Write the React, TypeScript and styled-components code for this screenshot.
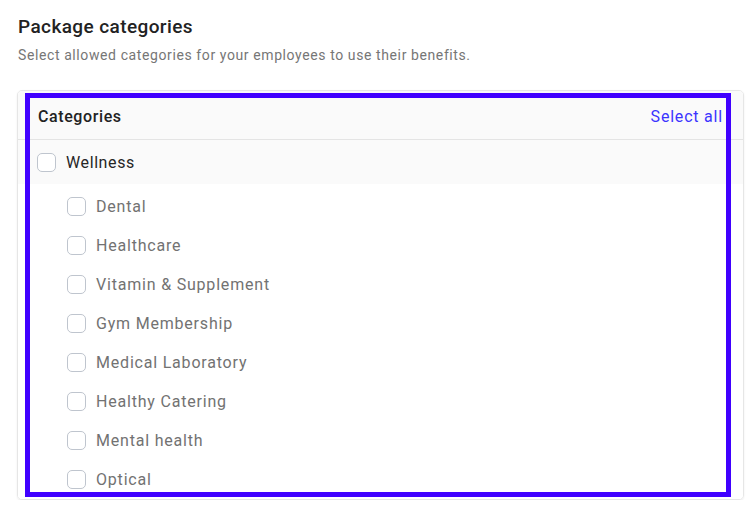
import React from "react";
import styled, { createGlobalStyle } from "styled-components";

const Global = createGlobalStyle`
  html, body { margin: 0; padding: 0; background: #ffffff; }
  body { font-family: Roboto, "Noto Sans", "Liberation Sans", sans-serif; }
  * { box-sizing: border-box; }
`;

const Page = styled.div`
  padding: 15px 10px 0 17px;
  width: 754px;
`;

const Title = styled.h2`
  margin: 0 0 0 1px;
  font-size: 19px;
  line-height: 24px;
  font-weight: 500;
  color: #222222;
  letter-spacing: 0.4px;
`;

const Subtitle = styled.p`
  margin: 7px 0 0 1px;
  font-size: 14px;
  line-height: 18px;
  color: #767676;
  letter-spacing: 0.6px;
`;

const Card = styled.div`
  position: relative;
  margin-top: 26px;
  width: 727px;
  height: 410px;
  border: 1px solid #e6e6e6;
  border-radius: 5px;
  box-shadow: 0 1px 2px rgba(0, 0, 0, 0.08);
  overflow: hidden;
`;

const FocusRing = styled.div`
  position: absolute;
  left: 7px;
  top: 2px;
  right: 12px;
  bottom: 2px;
  border: 5px solid #4000ff;
  pointer-events: none;
`;

const Header = styled.div`
  display: flex;
  align-items: center;
  justify-content: space-between;
  height: 49px;
  padding: 2px 20px 0 20px;
  background: #fafafa;
  border-bottom: 1px solid #e4e4e4;
`;

const HeaderLabel = styled.span`
  font-size: 16px;
  font-weight: 500;
  color: #222222;
  letter-spacing: 0.6px;
`;

const SelectAll = styled.button`
  border: 0;
  background: none;
  padding: 0;
  font-family: inherit;
  font-size: 16px;
  color: #3a34ff;
  letter-spacing: 0.8px;
  cursor: pointer;
`;

const Row = styled.label<{ $parent?: boolean }>`
  display: flex;
  align-items: center;
  gap: 10px;
  height: ${(p) => (p.$parent ? "44px" : "39px")};
  padding-left: ${(p) => (p.$parent ? "19px" : "49px")};
  background: ${(p) => (p.$parent ? "#fafafa" : "#ffffff")};
  font-size: 16px;
  letter-spacing: ${(p) => (p.$parent ? "0.6px" : "0.8px")};
  color: ${(p) => (p.$parent ? "#262626" : "#727272")};
`;

const Box = styled.span`
  width: 19px;
  height: 19px;
  border: 1.5px solid #bfc5ce;
  border-radius: 5px;
  background: #ffffff;
  flex: none;
`;

const List = styled.div`
  padding-top: 3px;
`;

const items = [
  "Dental",
  "Healthcare",
  "Vitamin & Supplement",
  "Gym Membership",
  "Medical Laboratory",
  "Healthy Catering",
  "Mental health",
  "Optical",
];

export default function App() {
  return (
    <>
      <Global />
      <Page>
        <Title>Package categories</Title>
        <Subtitle>Select allowed categories for your employees to use their benefits.</Subtitle>
        <Card>
          <Header>
            <HeaderLabel>Categories</HeaderLabel>
            <SelectAll>Select all</SelectAll>
          </Header>
          <Row $parent>
            <Box />
            Wellness
          </Row>
          <List>
            {items.map((it) => (
              <Row key={it}>
                <Box />
                {it}
              </Row>
            ))}
          </List>
          <FocusRing />
        </Card>
      </Page>
    </>
  );
}
